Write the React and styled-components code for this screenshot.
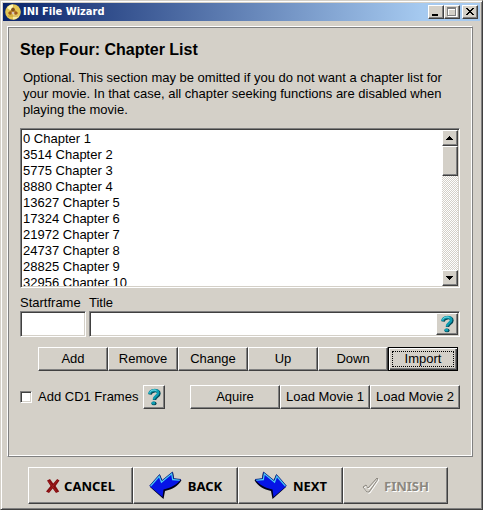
import React, { useRef, useState } from 'react';
import styled, { createGlobalStyle, css } from 'styled-components';

const GlobalStyle = createGlobalStyle`
  * {
    box-sizing: border-box;
  }
  body {
    margin: 0;
    background: #d4d0c8;
    color: #000;
    font: 13px/16px "Liberation Sans", Arial, sans-serif;
  }
`;

const raised = css`
  border: 1px solid;
  border-color: #fff #404040 #404040 #fff;
  box-shadow: inset -1px -1px 0 #808080;
`;

const sunken = css`
  border: 1px solid;
  border-color: #808080 #fff #fff #808080;
  box-shadow: inset 1px 1px 0 #404040, inset -1px -1px 0 #d4d0c8;
`;

const Window = styled.main`
  display: flex;
  flex-direction: column;
  min-height: 100vh;
  padding: 2px;
  border: 1px solid;
  border-color: #d4d0c8 #404040 #404040 #d4d0c8;
  box-shadow: inset 1px 1px 0 #fff, inset -1px -1px 0 #808080;
`;

const TitleBar = styled.header`
  display: flex;
  align-items: center;
  gap: 2px;
  height: 18px;
  padding: 0 2px;
  background: linear-gradient(90deg, #0a246a, #a6caf0 88%);
`;

const Title = styled.h1`
  flex: 1;
  margin: 0;
  color: #fff;
  font: bold 11px/16px "DejaVu Sans Condensed", "Noto Sans", sans-serif;
`;

const TitleButtons = styled.div`
  display: flex;
`;

const TitleButton = styled.button`
  ${raised}
  display: flex;
  width: 16px;
  height: 14px;
  margin-left: ${(props) => (props.$spaced ? '2px' : '0')};
  padding: 0;
  background: #d4d0c8;
`;

const Panel = styled.section`
  flex: 1;
  margin: 5px 7px 9px 4px;
  padding: 13px 12px 12px;
  border: 1px solid;
  border-color: #fff #808080 #808080 #fff;
  box-shadow: inset 1px 1px 0 #808080, inset -1px -1px 0 #fff;
`;

const Heading = styled.h2`
  margin: 0 0 10px;
  font-size: 16px;
  line-height: 20px;
`;

const Description = styled.p`
  margin: 0 0 10px;
  padding: 0 0 0 3px;
`;

const ListFrame = styled.div`
  ${sunken}
  display: flex;
  height: 160px;
  padding: 1px;
  background: #fff;
`;

const ChapterSelect = styled.select`
  flex: 1;
  min-width: 0;
  height: 156px;
  padding: 1px 0 0;
  border: 0;
  outline: 0;
  border-radius: 0;
  background: #fff;
  color: #000;
  font: inherit;
  overflow: hidden;
  scrollbar-width: none;

  option {
    height: 16px;
    min-height: 16px;
    padding: 0 1px;
    line-height: 16px;
  }
`;

const ScrollBar = styled.div`
  display: flex;
  flex-direction: column;
  width: 16px;
  background: repeating-conic-gradient(#d4d0c8 0 25%, #fff 0 50%) 0 0 / 2px 2px;
`;

const ScrollButton = styled.button`
  ${raised}
  display: flex;
  height: 16px;
  padding: 0;
  background: #d4d0c8;
`;

const ScrollThumb = styled.div`
  ${raised}
  height: 30px;
  margin-bottom: auto;
  background: #d4d0c8;
`;

const Fields = styled.div`
  display: flex;
  gap: 3px;
  margin-top: 7px;
`;

const Field = styled.div`
  display: flex;
  flex-direction: column;
  flex: ${(props) => (props.$grow ? '1' : '0 0 66px')};
  min-width: 0;
`;

const InputFrame = styled.div`
  ${sunken}
  display: flex;
  height: 26px;
  padding: 1px;
  background: #fff;
`;

const TextInput = styled.input`
  flex: 1;
  min-width: 0;
  padding: 0 2px;
  border: 0;
  outline: 0;
  background: transparent;
  font: inherit;
`;

const Button = styled.button`
  ${raised}
  flex: 0 0 ${(props) => props.$width || 70}px;
  height: 24px;
  padding: 0;
  background: #d4d0c8;
  color: #000;
  font: inherit;
  white-space: nowrap;

  ${(props) =>
    props.$focused &&
    css`
      border: 1px solid #000;
      box-shadow: inset 1px 1px 0 #fff, inset -1px -1px 0 #404040, inset -2px -2px 0 #808080;
      outline: 1px dotted #000;
      outline-offset: -5px;
    `}
`;

const HelpButton = styled(Button)`
  display: flex;
  align-items: center;
  justify-content: center;
  flex: 0 0 22px;
  height: ${(props) => (props.$small ? '22px' : '24px')};
`;

const EditButtons = styled.div`
  display: flex;
  justify-content: flex-end;
  margin: 10px 2px 14px 0;
`;

const OptionsRow = styled.div`
  display: flex;
  align-items: center;
`;

const CheckLabel = styled.label`
  display: flex;
  align-items: center;
  gap: 6px;
  margin-right: 5px;
  white-space: nowrap;
`;

const CheckBox = styled.input`
  ${sunken}
  appearance: none;
  width: 12px;
  height: 12px;
  margin: 0;
  background: #fff;

  &:checked {
    background: #404040;
    background-clip: content-box;
    padding: 2px;
  }
`;

const LoadButtons = styled.div`
  display: flex;
  margin-left: auto;
`;

const Footer = styled.footer`
  display: flex;
  justify-content: center;
  padding: 1px 7px 3px 0;
`;

const NavButton = styled.button`
  ${raised}
  display: flex;
  align-items: center;
  justify-content: center;
  gap: ${(props) => props.$gap || 4}px;
  width: 105px;
  height: 37px;
  padding: 0;
  background: #d4d0c8;
  color: #000;
  font: bold 13px/16px "Noto Sans", "Open Sans", sans-serif;

  &:disabled {
    color: #8c8880;
    text-shadow: 1px 1px 0 #fff;
  }
`;

const AppIcon = () => (
  <svg width="16" height="16" viewBox="0 0 16 16" aria-hidden="true">
    <circle cx="8" cy="8" r="7.8" fill="#e6c853" />
    <path d="M2 4a7.5 7.5 0 0 1 6-3.6L8 8z" fill="#fff6b8" />
    <path d="M14 12a7.5 7.5 0 0 1-6 3.6L8 8z" fill="#f8eaa0" />
    <path d="M8 3l2 3 3 3-2 2-3-1-3 1-2-2 3-3z" fill="#b8862a" />
    <circle cx="8" cy="5.6" r="1.8" fill="#80501e" />
    <circle cx="5" cy="9" r="1.5" fill="#a05a1d" />
    <circle cx="11" cy="9" r="1.5" fill="#a05a1d" />
    <circle cx="8" cy="9" r="1.3" fill="#d9c4b8" />
    <path d="M3 12h10" stroke="#c49a2e" />
  </svg>
);

const TitleGlyph = ({ children }) => (
  <svg width="14" height="12" viewBox="0 0 14 12" shapeRendering="crispEdges" aria-hidden="true">
    {children}
  </svg>
);

const ScrollArrow = ({ down }) => (
  <svg width="14" height="14" viewBox="0 0 14 14" shapeRendering="crispEdges" aria-hidden="true">
    <path d={down ? 'M3 5h7v1h-1v1h-1v1h-1v1h-1v-1h-1v-1h-1v-1h-1z' : 'M3 9h7v-1h-1v-1h-1v-1h-1v-1h-1v1h-1v1h-1v1h-1z'} />
  </svg>
);

const HelpIcon = () => (
  <svg width="16" height="18" viewBox="0 0 16 18" fill="none" aria-hidden="true">
    <path d="M4 6.5C4.5 1.8 13 1.4 13 5.4C13 8.4 8.500 8.4 8.5 12" stroke="#064a58" strokeWidth="3.4" />
    <path d="M3.3 6C4 1.2 12.200 1 12.2 4.8C12.2 8 7.8 8 7.8 11.6" stroke="#0d9db2" strokeWidth="2.6" />
    <path d="M3.8 4.5C5 1.6 9 1.6 10.5 2.8" stroke="#7be0ea" />
    <ellipse cx="8" cy="15.400" rx="2.6" ry="1.9" fill="#064a58" />
    <ellipse cx="7.4" cy="15" rx="2" ry="1.5" fill="#0d9db2" />
  </svg>
);

const CancelIcon = () => (
  <svg width="14" height="16" viewBox="0 0 14 16" aria-hidden="true">
    <path d="M1 2.5L4 1l3.200 4.5L11.2 1l2.300 1.500L9.600 8l3.600 5.500-3.200 1.500-3.300-4.400L3 15 0 13.600 4.500 8z" fill="#850c10" />
    <path d="M2.500 3l8 10.500M11.500 2.500L2.500 13.500" stroke="#a3201f" fill="none" />
  </svg>
);

const ArrowIcon = ({ right }) => (
  <svg width="33" height="29" viewBox="0 0 33 29" aria-hidden="true">
    <g transform={right ? 'matrix(-1 0 0 1 33 0)' : undefined}>
      <path d="M1 16L11 4l2.500 6L24 1.500l1 6.500 7.500 1C29.500 15 23 18.500 16 20l-1.500 8z" fill="#000018" />
      <path d="M0.500 15L10.500 3.500l2.500 6L23.500 1l1 6.500 7.500 1C28 13.500 22 17 14.500 18.500l-1 7.500z" fill="#0614e6" />
      <path d="M1.500 15L10.300 5l2.200 6L22.800 2.500l1 6 7 .5" fill="none" stroke="#4ccdf5" strokeWidth="1.500" />
      <path d="M0.500 15L10.500 3.500l2.500 6L23.500 1l1 6.500 7.500 1" fill="none" stroke="#001070" strokeWidth="0.700" />
    </g>
  </svg>
);

const CheckIcon = () => (
  <svg width="18" height="17" viewBox="0 0 18 17" fill="none" aria-hidden="true">
    <path d="M2 11l3-2 2 3 9-10 1 1L8 16H6z" stroke="#fff" />
    <path d="M1 10l3-2 2 3 9-10 1 1L7 15H5z" stroke="#8c8880" />
  </svg>
);

const chapters = [
  [0, 'Chapter 1'],
  [3514, 'Chapter 2'],
  [5775, 'Chapter 3'],
  [8880, 'Chapter 4'],
  [13627, 'Chapter 5'],
  [17324, 'Chapter 6'],
  [21972, 'Chapter 7'],
  [24737, 'Chapter 8'],
  [28825, 'Chapter 9'],
  [32956, 'Chapter 10'],
];

const App = () => {
  const listRef = useRef(null);
  const [startframe, setStartframe] = useState('');
  const [title, setTitle] = useState('');
  const [addFrames, setAddFrames] = useState(false);

  const scrollList = (amount) => {
    listRef.current.scrollTop += amount;
  };

  return (
    <Window>
      <GlobalStyle />
      <TitleBar>
        <AppIcon />
        <Title>INI File Wizard</Title>
        <TitleButtons>
          <TitleButton aria-label="Minimize">
            <TitleGlyph><path d="M3 8h6v2H3z" /></TitleGlyph>
          </TitleButton>
          <TitleButton aria-label="Maximize" disabled>
            <TitleGlyph>
              <path d="M3 2h9v9H3zM4 4v6h7V4z" fill="#fff" fillRule="evenodd" />
              <path d="M2 1h9v9H2zM3 3v6h7V3z" fill="#808080" fillRule="evenodd" />
            </TitleGlyph>
          </TitleButton>
          <TitleButton aria-label="Close" $spaced>
            <TitleGlyph>
              <path d="M3 2h2v1h1v1h2V3h1V2h2v1h-1v1H9v1H8v1h1v1h1v1h1v1H9V8H8V7H6v1H5v1H3V8h1V7h1V6h1V5H5V4H4V3H3z" />
            </TitleGlyph>
          </TitleButton>
        </TitleButtons>
      </TitleBar>

      <Panel>
        <Heading>Step Four: Chapter List</Heading>
        <Description>
          Optional. This section may be omitted if you do not want a chapter list for
          your movie. In that case, all chapter seeking functions are disabled when
          playing the movie.
        </Description>

        <ListFrame>
          <ChapterSelect ref={listRef} size={10} aria-label="Chapter list">
            {chapters.map(([frame, name]) => (
              <option key={frame} value={frame}>{`${frame} ${name}`}</option>
            ))}
          </ChapterSelect>
          <ScrollBar>
            <ScrollButton aria-label="Scroll up" onClick={() => scrollList(-16)}>
              <ScrollArrow />
            </ScrollButton>
            <ScrollThumb />
            <ScrollButton aria-label="Scroll down" onClick={() => scrollList(16)}>
              <ScrollArrow down />
            </ScrollButton>
          </ScrollBar>
        </ListFrame>

        <Fields>
          <Field>
            <label htmlFor="startframe">Startframe</label>
            <InputFrame>
              <TextInput
                id="startframe"
                value={startframe}
                onChange={(e) => setStartframe(e.target.value)}
              />
            </InputFrame>
          </Field>
          <Field $grow>
            <label htmlFor="title">Title</label>
            <InputFrame>
              <TextInput id="title" value={title} onChange={(e) => setTitle(e.target.value)} />
              <HelpButton $small aria-label="Help on titles"><HelpIcon /></HelpButton>
            </InputFrame>
          </Field>
        </Fields>

        <EditButtons>
          <Button>Add</Button>
          <Button>Remove</Button>
          <Button>Change</Button>
          <Button>Up</Button>
          <Button>Down</Button>
          <Button $focused>Import</Button>
        </EditButtons>

        <OptionsRow>
          <CheckLabel>
            <CheckBox
              type="checkbox"
              checked={addFrames}
              onChange={(e) => setAddFrames(e.target.checked)}
            />
            Add CD1 Frames
          </CheckLabel>
          <HelpButton aria-label="Help on CD1 frames"><HelpIcon /></HelpButton>
          <LoadButtons>
            <Button $width={90}>Aquire</Button>
            <Button $width={90}>Load Movie 1</Button>
            <Button $width={90}>Load Movie 2</Button>
          </LoadButtons>
        </OptionsRow>
      </Panel>

      <Footer>
        <NavButton><CancelIcon />CANCEL</NavButton>
        <NavButton $gap={6}><ArrowIcon />BACK</NavButton>
        <NavButton $gap={6}><ArrowIcon right />NEXT</NavButton>
        <NavButton disabled><CheckIcon />FINISH</NavButton>
      </Footer>
    </Window>
  );
};

export default App;
